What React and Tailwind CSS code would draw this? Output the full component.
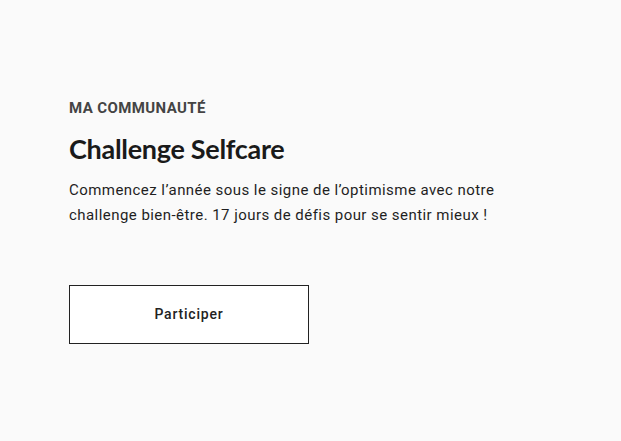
import React from 'react';

const App = () => {
  return (
    <section className="min-h-[441px] w-full bg-[#fafafa] pl-[69px] pt-[99px] font-['Roboto',sans-serif]">
      <p className="text-[15px] font-bold tracking-[0.4px] leading-[19px] text-[#444]">MA COMMUNAUTÉ</p>
      <h2 className="mt-[14px] text-[27px] font-bold leading-[34px] text-[#1a1a1a] font-['Lato',sans-serif] tracking-[-0.3px]">
        Challenge Selfcare
      </h2>
      <p className="mt-[12px] w-[470px] text-[15px] leading-[25px] text-[#1f1f1f] tracking-[0.45px]">
        Commencez l’année sous le signe de l’optimisme avec notre challenge bien-être. 17 jours de défis pour se sentir mieux !
      </p>
      <button
        type="submit"
        className="mt-[57px] flex h-[59px] w-[240px] items-center justify-center border border-[#222] bg-white text-[14px] font-medium tracking-[0.8px] text-[#222]"
      >
        Participer
      </button>
    </section>
  );
};

export default App;
